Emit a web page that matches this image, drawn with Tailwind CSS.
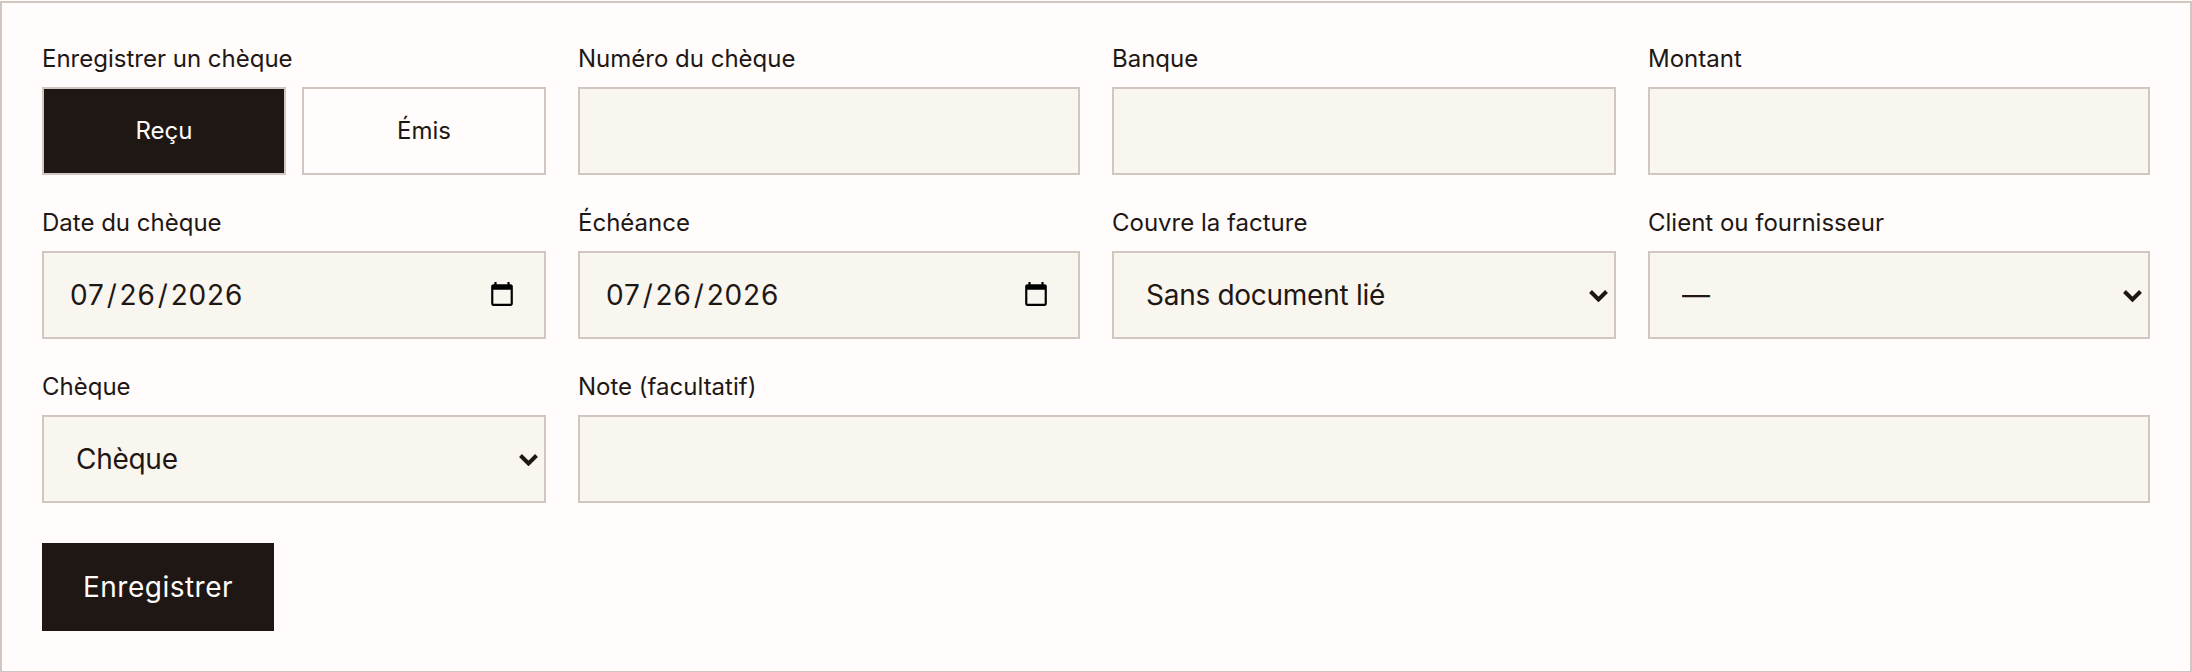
<!DOCTYPE html>
<html lang="fr" class="[zoom:2] h-[336px] overflow-hidden">
<head>
<meta charset="utf-8">
<script src="https://cdn.jsdelivr.net/npm/@tailwindcss/browser@4"></script>
</head>
<body class="h-[336px] overflow-hidden bg-[#fffcfb] font-['Inter',sans-serif] text-[#1e1714]">
<form class="mt-[0.5px] border border-[#d1c6c0] bg-[#fffcfb] p-5">
  <div class="grid grid-cols-[252px_251px_252px_251px] gap-4">
    <div>
      <div class="mb-1.5 text-xs">Enregistrer un chèque</div>
      <div class="grid grid-cols-2 gap-2">
        <button type="button" class="h-11 border border-[#d1c6c0] bg-[#1e1714] text-xs text-[#fffcfb]">Reçu</button>
        <button type="button" class="h-11 border border-[#d1c6c0] bg-[#fffcfb] text-xs">Émis</button>
      </div>
    </div>
    <div>
      <div class="mb-1.5 text-xs">Numéro du chèque</div>
      <input class="block h-11 w-full border border-[#d1c6c0] bg-[#f9f5ef] px-3 text-sm">
    </div>
    <div>
      <div class="mb-1.5 text-xs">Banque</div>
      <input class="block h-11 w-full border border-[#d1c6c0] bg-[#f9f5ef] px-3 text-sm">
    </div>
    <div>
      <div class="mb-1.5 text-xs">Montant</div>
      <input class="block h-11 w-full border border-[#d1c6c0] bg-[#f9f5ef] px-3 text-sm">
    </div>
    <div>
      <div class="mb-1.5 text-xs">Date du chèque</div>
      <input type="date" value="2026-07-26" class="block h-11 w-full border border-[#d1c6c0] bg-[#f9f5ef] px-3 text-sm tracking-[0.03em]">
    </div>
    <div>
      <div class="mb-1.5 text-xs">Échéance</div>
      <input type="date" value="2026-07-26" class="block h-11 w-full border border-[#d1c6c0] bg-[#f9f5ef] px-3 text-sm tracking-[0.03em]">
    </div>
    <div>
      <div class="mb-1.5 text-xs">Couvre la facture</div>
      <div class="relative">
        <select class="block h-11 w-full appearance-none border border-[#d1c6c0] bg-[#f9f5ef] pl-4 pr-6 text-sm tracking-[-0.01em]"><option>Sans document lié</option></select>
        <svg class="pointer-events-none absolute right-[4px] top-[19px] h-[6.5px] w-[9.5px] text-[#1e1714]" viewBox="0 0 19 13" fill="none" stroke="currentColor" stroke-width="4"><path d="M1.5 2.5 9.5 10.5 17.5 2.5"/></svg>
      </div>
    </div>
    <div>
      <div class="mb-1.5 text-xs">Client ou fournisseur</div>
      <div class="relative">
        <select class="block h-11 w-full appearance-none border border-[#d1c6c0] bg-[#f9f5ef] pl-4 pr-6 text-sm tracking-[-0.01em]"><option>—</option></select>
        <svg class="pointer-events-none absolute right-[4px] top-[19px] h-[6.5px] w-[9.5px] text-[#1e1714]" viewBox="0 0 19 13" fill="none" stroke="currentColor" stroke-width="4"><path d="M1.5 2.5 9.5 10.5 17.5 2.5"/></svg>
      </div>
    </div>
    <div>
      <div class="mb-1.5 text-xs">Chèque</div>
      <div class="relative">
        <select class="block h-11 w-full appearance-none border border-[#d1c6c0] bg-[#f9f5ef] pl-4 pr-6 text-sm tracking-[-0.01em]"><option>Chèque</option></select>
        <svg class="pointer-events-none absolute right-[4px] top-[19px] h-[6.5px] w-[9.5px] text-[#1e1714]" viewBox="0 0 19 13" fill="none" stroke="currentColor" stroke-width="4"><path d="M1.5 2.5 9.5 10.5 17.5 2.5"/></svg>
      </div>
    </div>
    <div class="col-span-3">
      <div class="mb-1.5 text-xs">Note (facultatif)</div>
      <input class="block h-11 w-full border border-[#d1c6c0] bg-[#f9f5ef] px-3 text-sm">
    </div>
  </div>
  <button type="submit" class="mt-5 block h-11 w-[116px] bg-[#1e1714] text-sm tracking-[0.018em] text-[#fffcfb]">Enregistrer</button>
</form>
</body>
</html>
